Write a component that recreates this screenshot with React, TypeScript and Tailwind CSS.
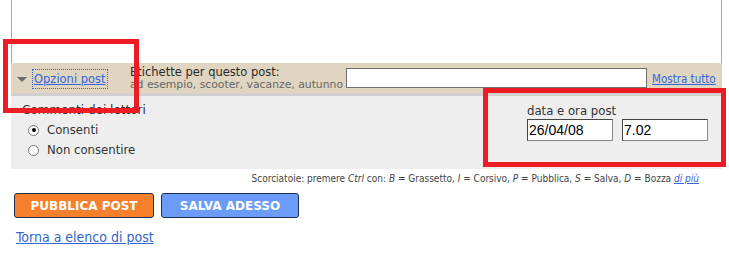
import React from "react";

const ui = "font-['Tahoma','DejaVu_Sans_Condensed','DejaVu_Sans',sans-serif]";
const wide = "font-['Verdana','DejaVu_Sans',sans-serif]";

const App: React.FC = () => {
    return (
        <div className={`relative w-[729px] h-[258px] overflow-hidden bg-white text-[#333] ${ui}`}>
            <div className="ml-[11px] w-[711px]">
                {/* editor area, cut off at the top */}
                <div className="h-[63px] bg-white border-x border-[#a8a8a8]" />

                {/* post options bar */}
                <div className="h-[33px] bg-[#e0d5c1] border-b-[3px] border-[#d0d0d0] flex items-start whitespace-nowrap">
                    <div className="flex items-center pt-[7px] pl-[6px] w-[119px] shrink-0">
                        <span className="mt-[1px] w-0 h-0 border-x-[5px] border-x-transparent border-t-[5px] border-t-[#6b6b6b]" />
                        <a href="#" className={`ml-[6px] text-[11.5px] leading-[18px] text-[#3366dd] underline outline-1 outline-dotted outline-[#3366dd] px-[1px] ${wide}`}>Opzioni post</a>
                    </div>
                    <div className={`w-[216px] pt-[4px] leading-[11.5px] shrink-0 ${wide}`}>
                        <div className="text-[11.5px] text-[#2a2a2a]">Etichette per questo post:</div>
                        <div className="text-[10.8px] text-[#666]">ad esempio, scooter, vacanze, autunno</div>
                    </div>
                    <input className="mt-[5px] w-[301px] h-[20px] shrink-0 bg-white border border-[#707070]" defaultValue="" />
                    <a href="#" className="ml-[5px] mt-[9px] shrink-0 text-[11.5px] leading-[14px] text-[#3366dd] underline">Mostra tutto</a>
                </div>

                {/* comments + date */}
                <div className="h-[73px] bg-[#eeeeee] flex justify-between">
                    <div className="pl-[11px] pt-[6px]">
                        <div className={`text-[12px] leading-[16px] text-[#333] ${wide}`}>Commenti dei lettori</div>
                        <label className="flex items-center mt-[4px] pl-[6px] text-[13px] leading-[16px]">
                            <span className="w-[11px] h-[11px] rounded-full border border-[#777] bg-white flex items-center justify-center">
                                <span className="w-[4px] h-[4px] rounded-full bg-black" />
                            </span>
                            <span className="ml-[8px]">Consenti</span>
                        </label>
                        <label className="flex items-center mt-[4px] pl-[6px] text-[13px] leading-[16px]">
                            <span className="w-[11px] h-[11px] rounded-full border border-[#777] bg-white" />
                            <span className="ml-[8px]">Non consentire</span>
                        </label>
                    </div>
                    <div className="pr-[14px] pt-[7px]">
                        <div className="text-[13px] leading-[15px] text-[#333]">data e ora post</div>
                        <div className="flex gap-[9px] mt-[1px]">
                            <input className="w-[86px] h-[22px] bg-white border border-[#888] border-t-[#444] border-l-[#444] px-[1px] text-[14px] font-['Liberation_Sans',Arial,sans-serif] text-black" defaultValue="26/04/08" />
                            <input className="w-[86px] h-[22px] bg-white border border-[#888] border-t-[#444] border-l-[#444] px-[1px] text-[14px] font-['Liberation_Sans',Arial,sans-serif] text-black" defaultValue="7.02" />
                        </div>
                    </div>
                </div>

                {/* shortcuts */}
                <div className="mt-[3px] pr-[23px] text-right text-[10px] leading-[14px] text-[#444]">
                    Scorciatoie: premere <i>Ctrl</i> con: <i>B</i> = Grassetto, <i>I</i> = Corsivo, <i>P</i> = Pubblica, <i>S</i> = Salva, <i>D</i> = Bozza <a href="#" className="italic text-[#3366dd] underline">di più</a>
                </div>

                {/* buttons */}
                <div className="flex gap-[7px] mt-[7px] ml-[3px]">
                    <button className={`w-[140px] h-[25px] rounded-[3px] border border-[#1f2f4f] bg-[#f6802b] text-white font-bold text-[12px] ${wide}`}>PUBBLICA POST</button>
                    <button className={`w-[138px] h-[25px] rounded-[3px] border border-[#1f2f4f] bg-[#6b9cf7] text-white font-bold text-[12px] ${wide}`}>SALVA ADESSO</button>
                </div>

                <a href="#" className="inline-block mt-[11px] ml-[5px] text-[14px] leading-[16px] text-[#3366cc] underline">Torna a elenco di post</a>
            </div>

            {/* red annotation boxes */}
            <div className="absolute left-[3px] top-[39px] w-[136px] h-[74px] border-[5px] border-[#ed1c24]" />
            <div className="absolute left-[483px] top-[88px] w-[243px] h-[79px] border-[5px] border-[#ed1c24]" />
        </div>
    );
};

export default App;
